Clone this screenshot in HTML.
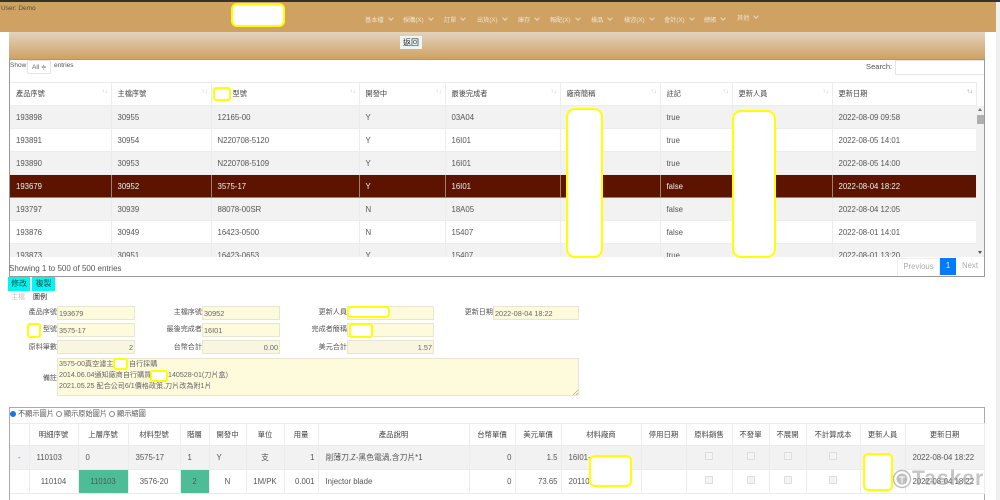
<!DOCTYPE html>
<html><head><meta charset="utf-8">
<style>
*{box-sizing:border-box}
html,body{margin:0;padding:0;width:1000px;height:500px;overflow:hidden;background:#fff}
body{font-family:"Liberation Sans","Noto Sans CJK TC",sans-serif;font-size:7.8px;color:#555;position:relative;filter:blur(.3px)}
.a{position:absolute;white-space:nowrap}
.blob{position:absolute;background:#fff;border:2px solid #ffff00;border-radius:5px;z-index:5}
table{border-collapse:collapse;table-layout:fixed;position:absolute;font-size:7.8px;color:#555}
td,th{padding:0 0 0 6px;border-right:1px solid #ececec;border-bottom:1px solid #ececec;text-align:left;overflow:hidden;white-space:nowrap;font-weight:normal}
th{color:#444;position:relative;font-size:7.2px}
th i{position:absolute;right:3px;top:6px;font-style:normal;font-size:6px;color:#bbb}
.s td{background:#f2f2f2}
.sel td{background:#5c1400;color:#eee;border-color:#a08070}
.nav{position:absolute;top:15px;font-size:6.2px;color:#f0e4d0;white-space:nowrap}
.nav:after{content:"";display:inline-block;width:3px;height:3px;border-right:1px solid #e8d8c0;border-bottom:1px solid #e8d8c0;transform:rotate(45deg);margin:0 0 2px 5px}
.in{position:absolute;height:14px;background:#fdfbdc;border:1px solid #e8e6cc;font-size:7.3px;color:#666;padding:1px 1px;white-space:nowrap;line-height:11px}
.n{background:#f8f6e0;text-align:right}
.l{position:absolute;font-size:7.1px;color:#555;text-align:right;white-space:nowrap}
.rm{position:absolute;font-size:7.1px;color:#666;white-space:nowrap;line-height:11px;z-index:3}
#b th{text-align:center;padding:0;font-size:7.4px}
#b td{padding:0 3px 0 7px}
.r{text-align:right!important}
.c{text-align:center!important;padding:0!important}
.g{background:#4dbd97!important}
.cb{display:inline-block;width:8px;height:8px;border:1px solid #ddd;background:#f4f4f4;border-radius:1px;vertical-align:middle;margin-top:-3px}
.radio{display:inline-block;width:6px;height:6px;border:1px solid #888;border-radius:50%;vertical-align:-0.5px;background:#fff}
</style></head>
<body>
<div style="position:absolute;left:0;top:0;width:1000px;height:2px;background:#33322f"></div>
<div style="position:absolute;left:0;top:2px;width:996px;height:30px;background:#cfa163"></div>
<div style="position:absolute;left:996px;top:2px;width:4px;height:498px;background:#f0f0f0"></div>
<div class="a" style="left:1px;top:5px;font-size:6.5px;color:#5a4a35">User: Demo</div>
<div class="blob" style="left:231px;top:3px;width:54px;height:24px;border-radius:6px"></div>
<span class="nav" style="left:365px">基本檔</span>
<span class="nav" style="left:403px">採購(X)</span>
<span class="nav" style="left:444px">訂單</span>
<span class="nav" style="left:477px">出貨(X)</span>
<span class="nav" style="left:518px">庫存</span>
<span class="nav" style="left:550px">報配(X)</span>
<span class="nav" style="left:591px">樣品</span>
<span class="nav" style="left:624px">樣咨(X)</span>
<span class="nav" style="left:664px">會計(X)</span>
<span class="nav" style="left:704px">總帳</span>
<span class="nav" style="left:737px;top:13px">其他</span>

<div style="position:absolute;left:9px;top:32px;width:976px;height:27px;background:linear-gradient(#e2d3c0,#cfa163)"></div>
<div class="a" style="left:400px;top:36px;width:22px;height:13px;background:#eaf6f6;color:#222;font-size:8px;text-align:center;line-height:13px">返回</div>

<div style="position:absolute;left:9px;top:59px;width:976px;height:218px;border:1px solid #999;background:#fff"></div>
<div class="a" style="left:10px;top:62px;font-size:6.5px;color:#555">Show</div>
<div class="a" style="left:27px;top:60px;width:24px;height:14px;border:1px solid #e4e4e4;border-radius:2px;font-size:6.5px;color:#666;padding:2px 0 0 4px">All ≑</div>
<div class="a" style="left:54px;top:62px;font-size:6.5px;color:#555">entries</div>
<div class="a" style="left:866px;top:62px;font-size:7.6px;color:#555">Search:</div>
<div class="a" style="left:895px;top:60px;width:89px;height:15px;border:1px solid #e4e4e4;border-right:0"></div>

<div style="position:absolute;left:10px;top:82px;width:974px;height:175px;overflow:hidden">
<table style="left:0;top:0;width:966px;border-top:1px solid #ececec">
<colgroup><col style="width:101px"><col style="width:100px"><col style="width:148px"><col style="width:86px"><col style="width:115px"><col style="width:100px"><col style="width:72px"><col style="width:100px"><col style="width:144px"></colgroup>
<tr style="height:23px"><th>產品序號<i>↑↓</i></th><th>主檔序號<i>↑↓</i></th><th><span style="margin-left:15px">型號</span><i>↑↓</i></th><th>開發中<i>↑↓</i></th><th>最後完成者<i>↑↓</i></th><th>廠商簡稱<i>↑↓</i></th><th>註記<i>↑↓</i></th><th>更新人員<i>↑↓</i></th><th>更新日期<i style="color:#666">↑↓</i></th></tr>
<tr class="s" style="height:23px"><td>193898</td><td>30955</td><td>12165-00</td><td>Y</td><td>03A04</td><td></td><td>true</td><td></td><td>2022-08-09 09:58</td></tr>
<tr style="height:23px"><td>193891</td><td>30954</td><td>N220708-5120</td><td>Y</td><td>16I01</td><td></td><td>true</td><td></td><td>2022-08-05 14:01</td></tr>
<tr class="s" style="height:23px"><td>193890</td><td>30953</td><td>N220708-5109</td><td>Y</td><td>16I01</td><td></td><td>true</td><td></td><td>2022-08-05 14:00</td></tr>
<tr class="sel" style="height:23px"><td>193679</td><td>30952</td><td>3575-17</td><td>Y</td><td>16I01</td><td></td><td>false</td><td></td><td>2022-08-04 18:22</td></tr>
<tr class="s" style="height:23px"><td>193797</td><td>30939</td><td>88078-00SR</td><td>N</td><td>18A05</td><td></td><td>false</td><td></td><td>2022-08-04 12:05</td></tr>
<tr style="height:23px"><td>193876</td><td>30949</td><td>16423-0500</td><td>N</td><td>15407</td><td></td><td>false</td><td></td><td>2022-08-01 14:01</td></tr>
<tr class="s" style="height:23px"><td>193873</td><td>30951</td><td>16423-0653</td><td>Y</td><td>15407</td><td></td><td>true</td><td></td><td>2022-08-01 13:20</td></tr>
</table>
</div>
<div style="position:absolute;left:976px;top:106px;width:8px;height:151px;background:#f1f1f1"></div>
<div style="position:absolute;left:977px;top:115px;width:7px;height:9px;background:#b0b0b0"></div>
<div class="a" style="left:978px;top:108px;border:2.5px solid transparent;border-bottom:3px solid #777;width:0;height:0;border-top:0"></div>
<div class="a" style="left:978px;top:251px;border:2.5px solid transparent;border-top:3px solid #555;width:0;height:0;border-bottom:0"></div>

<div class="blob" style="left:213px;top:87px;width:18px;height:14px;border-radius:3px"></div>
<div class="blob" style="left:566px;top:108px;width:37px;height:150px;border-radius:9px"></div>
<div class="blob" style="left:732px;top:110px;width:44px;height:148px;border-radius:9px"></div>

<div class="a" style="left:9px;top:264px;font-size:8px;color:#555">Showing 1 to 500 of 500 entries</div>
<div class="a" style="left:897px;top:258px;width:43px;height:18px;border:1px solid #eee;border-bottom:0;color:#aaa;font-size:7.8px;text-align:center;line-height:16px">Previous</div>
<div class="a" style="left:940px;top:258px;width:16px;height:17px;background:#007bff;color:#eee;font-size:7.8px;text-align:center;line-height:16px">1</div>
<div class="a" style="left:956px;top:258px;width:28px;height:18px;color:#aaa;font-size:7.8px;text-align:center;line-height:16px">Next</div>

<div class="a" style="left:8px;top:277px;width:22px;height:14px;background:#00f5f5;color:#154;font-size:8px;text-align:center;line-height:14px">修改</div>
<div class="a" style="left:32px;top:277px;width:23px;height:14px;background:#00f5f5;color:#154;font-size:8px;text-align:center;line-height:14px">複製</div>
<div class="a" style="left:11px;top:292px;font-size:7px;color:#c5c5c5">主檔</div>
<div class="a" style="left:33px;top:292px;font-size:7px;color:#222">圖例</div>

<div class="l" style="left:20px;width:37px;top:307px">產品序號</div>
<div class="in" style="left:57px;top:306px;width:78px">193679</div>
<div class="l" style="left:165px;width:37px;top:307px">主檔序號</div>
<div class="in" style="left:202px;top:306px;width:78px">30952</div>
<div class="l" style="left:310px;width:37px;top:307px">更新人員</div>
<div class="in" style="left:347px;top:306px;width:87px"></div>
<div class="l" style="left:455px;width:38px;top:307px">更新日期</div>
<div class="in" style="left:493px;top:306px;width:86px">2022-08-04 18:22</div>

<div class="l" style="left:20px;width:37px;top:324px">型號</div>
<div class="in" style="left:57px;top:323px;width:78px">3575-17</div>
<div class="l" style="left:165px;width:37px;top:324px">最後完成者</div>
<div class="in" style="left:202px;top:323px;width:78px">16I01</div>
<div class="l" style="left:300px;width:47px;top:324px">完成者簡稱</div>
<div class="in" style="left:347px;top:323px;width:87px"></div>

<div class="l" style="left:20px;width:37px;top:342px">原料筆數</div>
<div class="in n" style="left:57px;top:340px;width:78px">2</div>
<div class="l" style="left:165px;width:37px;top:342px">台幣合計</div>
<div class="in n" style="left:202px;top:340px;width:78px">0.00</div>
<div class="l" style="left:310px;width:37px;top:342px">美元合計</div>
<div class="in n" style="left:347px;top:340px;width:87px">1.57</div>

<div class="l" style="left:20px;width:37px;top:373px">備註</div>
<div class="in" style="left:57px;top:358px;width:522px;height:38px"></div>
<div class="rm" style="left:59px;top:359px">3575-00真空濾主</div>
<div class="rm" style="left:129px;top:359px">自行採購</div>
<div class="rm" style="left:59px;top:370px">2014.06.04通知廠商自行購買</div>
<div class="rm" style="left:168px;top:370px">140528-01(刀片盒)</div>
<div class="rm" style="left:59px;top:381px">2021.05.25 配合公司6/1價格政策,刀片改為附1片</div>
<svg style="position:absolute;left:573px;top:390px" width="5" height="5"><path d="M0 5L5 0M3 5L5 3" stroke="#999" stroke-width=".6"/></svg>

<div class="blob" style="left:27px;top:323px;width:14px;height:15px;border-radius:3px"></div>
<div class="blob" style="left:347px;top:306px;width:43px;height:12px;border-radius:4px"></div>
<div class="blob" style="left:349px;top:323px;width:24px;height:15px;border-radius:3px"></div>
<div class="blob" style="left:113px;top:358px;width:15px;height:12px;border-radius:3px"></div>
<div class="blob" style="left:150px;top:370px;width:18px;height:12px;border-radius:3px"></div>

<div style="position:absolute;left:9px;top:407px;width:976px;height:93px;border:1px solid #aaa;border-bottom:0;background:#fff"></div>
<div class="a" style="left:10px;top:409px;font-size:7.2px;color:#555"><span class="radio" style="background:#1a73e8;border-color:#1a73e8"></span> 不顯示圖片 <span class="radio"></span> 顯示原始圖片 <span class="radio"></span> 顯示縮圖</div>

<table id="b" style="left:10px;top:423px;width:974px;border-top:1px solid #ececec">
<colgroup><col style="width:19px"><col style="width:49px"><col style="width:50px"><col style="width:52px"><col style="width:29px"><col style="width:37px"><col style="width:38px"><col style="width:34px"><col style="width:151px"><col style="width:46px"><col style="width:46px"><col style="width:80px"><col style="width:45px"><col style="width:46px"><col style="width:37px"><col style="width:37px"><col style="width:54px"><col style="width:45px"><col style="width:79px"></colgroup>
<tr style="height:22px"><th></th><th>明細序號</th><th>上層序號</th><th>材料型號</th><th>階層</th><th>開發中</th><th>單位</th><th>用量</th><th>產品說明</th><th>台幣單價</th><th>美元單價</th><th>材料廠商</th><th>停用日期</th><th>原料銷售</th><th>不發單</th><th>不展開</th><th>不計算成本</th><th>更新人員</th><th>更新日期</th></tr>
<tr class="s" style="height:24px"><td class="c" style="color:#66c">-</td><td>110103</td><td>0</td><td>3575-17</td><td>1</td><td>Y</td><td class="c">支</td><td class="r">1</td><td>削薄刀,Z-黑色電渦,含刀片*1</td><td class="r">0</td><td class="r">1.5</td><td>16I01-</td><td></td><td class="c"><span class="cb"></span></td><td class="c"><span class="cb"></span></td><td class="c"><span class="cb"></span></td><td class="c"><span class="cb"></span></td><td></td><td>2022-08-04 18:22</td></tr>
<tr style="height:24px"><td></td><td class="c">110104</td><td class="g c">110103</td><td class="c">3576-20</td><td class="g c">2</td><td class="c">N</td><td class="c">1M/PK</td><td class="r">0.001</td><td>Injector blade</td><td class="r">0</td><td class="r">73.65</td><td>20110</td><td></td><td class="c"><span class="cb"></span></td><td class="c"><span class="cb"></span></td><td class="c"><span class="cb"></span></td><td class="c"><span class="cb"></span></td><td></td><td>2022-08-04 18:22</td></tr>
</table>

<div class="blob" style="left:589px;top:455px;width:43px;height:32px;border-radius:6px"></div>
<div class="blob" style="left:863px;top:453px;width:30px;height:38px;border-radius:5px"></div>

<svg style="position:absolute;left:892px;top:469px;z-index:6" width="20" height="20" viewBox="0 0 20 20"><circle cx="10" cy="10" r="8.5" fill="none" stroke="#aaa" stroke-opacity=".75" stroke-width="1.5"/><circle cx="10" cy="10" r="5.5" fill="#aaa" fill-opacity=".75"/><path d="M7 8h6M10 8v6" stroke="#eee" stroke-width="1.5"/></svg>
<div class="a" style="left:912px;top:467px;font-size:21px;font-weight:bold;color:rgba(150,150,150,.55);letter-spacing:1px;z-index:6">Tasker</div>
</body></html>
